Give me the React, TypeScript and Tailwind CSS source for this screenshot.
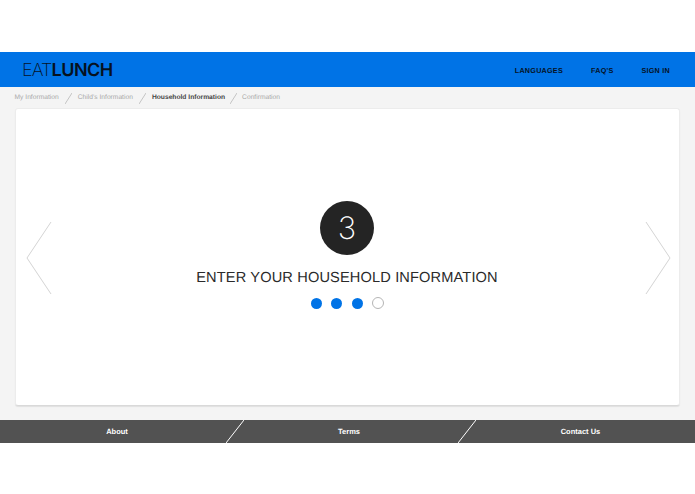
import { Fragment } from 'react';

const crumbs = [
  { label: 'My Information', active: false },
  { label: "Child's Information", active: false },
  { label: 'Household Information', active: true },
  { label: 'Confirmation', active: false },
];

const Slash = ({ className }: { className: string }) => (
  <svg viewBox="0 0 10 10" preserveAspectRatio="none" className={className}>
    <line x1="10" y1="0" x2="0" y2="10" stroke="currentColor" strokeWidth="1" vectorEffect="non-scaling-stroke" />
  </svg>
);

const Chevron = ({ flip, className }: { flip?: boolean; className: string }) => (
  <svg width="26" height="74" viewBox="0 0 26 74" className={className}>
    <polyline
      points={flip ? '1,1 25,37 1,73' : '25,1 1,37 25,73'}
      fill="none"
      stroke="#d4d4d4"
      strokeWidth="1"
    />
  </svg>
);

export default function App() {
  return (
    <div className="w-[695px] h-[494px] bg-white flex flex-col overflow-hidden font-['Liberation_Sans',Arial,sans-serif] [text-rendering:geometricPrecision]">
      <div className="h-[52px] shrink-0" />

      {/* Header */}
      <header className="h-[35px] shrink-0 bg-[#0073e6] flex items-center justify-between pl-[22px] pr-[25px]">
        <div className="flex items-center leading-none text-[#06121f] font-['Inter',sans-serif] pt-[2px]">
          <span className="font-[200] text-[18px] tracking-[-0.9px]">EAT</span>
          <span className="font-semibold text-[18px] tracking-[-0.5px]">LUNCH</span>
        </div>
        <nav className="flex items-center gap-[28px] text-[7.2px] font-bold tracking-[0.25px] text-[#06121f] pt-[3px]">
          <a>LANGUAGES</a>
          <a>FAQ'S</a>
          <a>SIGN IN</a>
        </nav>
      </header>

      <main className="h-[333px] shrink-0 bg-[#f4f4f4] flex flex-col px-[15px]">
        {/* Breadcrumb */}
        <div className="h-[21px] shrink-0 flex items-center text-[6.7px] -ml-[0.5px] pt-[1px]">
          {crumbs.map((c, i) => (
            <Fragment key={c.label}>
              {i > 0 && (
                <Slash className={i === 3 ? 'w-[7px] h-[11px] mx-[5px] text-[#c4c4c4]' : 'w-[7px] h-[11px] mx-[6px] text-[#c4c4c4]'} />
              )}
              <span className={c.active ? 'font-bold text-[#444444] pt-[1px]' : 'text-[#a8a8a8]'}>{c.label}</span>
            </Fragment>
          ))}
        </div>

        {/* Card */}
        <section className="relative h-[298px] bg-white rounded-[3px] border border-[#ececec] border-b-[#d9d9d9] shadow-[0_1px_1px_rgba(0,0,0,0.08)] flex flex-col items-center pt-[92px] pr-[1px]">
          <Chevron className="absolute left-[10px] top-[112px]" />
          <Chevron flip className="absolute right-[8px] top-[112px]" />

          <div className="w-[54px] h-[54px] rounded-full bg-[#242424] flex items-center justify-center">
            <span className="font-['Inter',sans-serif] font-[200] text-[31px] leading-none text-white">3</span>
          </div>
          <h1 className="mt-[14px] text-[14.6px] leading-[18px] font-normal tracking-[0.14px] text-[#2a2a2a]">
            ENTER YOUR HOUSEHOLD INFORMATION
          </h1>
          <div className="mt-[10px] ml-[1px] flex items-center gap-[9.5px]">
            <span className="w-[11px] h-[11px] rounded-full bg-[#0073e6]" />
            <span className="w-[11px] h-[11px] rounded-full bg-[#0073e6]" />
            <span className="w-[11px] h-[11px] rounded-full bg-[#0073e6]" />
            <span className="w-[12px] h-[12px] rounded-full border border-[#b5b5b5] bg-white" />
          </div>
        </section>
      </main>

      {/* Footer */}
      <footer className="h-[23px] shrink-0 bg-[#525252] flex items-stretch text-[7.5px] font-bold text-white">
        <a className="w-[226px] flex items-center justify-center pl-[8px] pt-[1px]">About</a>
        <Slash className="w-[18px] h-[23px] text-white" />
        <a className="w-[214px] flex items-center justify-center pr-[4px]">Terms</a>
        <Slash className="w-[18px] h-[23px] text-white" />
        <a className="flex-1 flex items-center justify-center pr-[10px]">Contact Us</a>
      </footer>
    </div>
  );
}
